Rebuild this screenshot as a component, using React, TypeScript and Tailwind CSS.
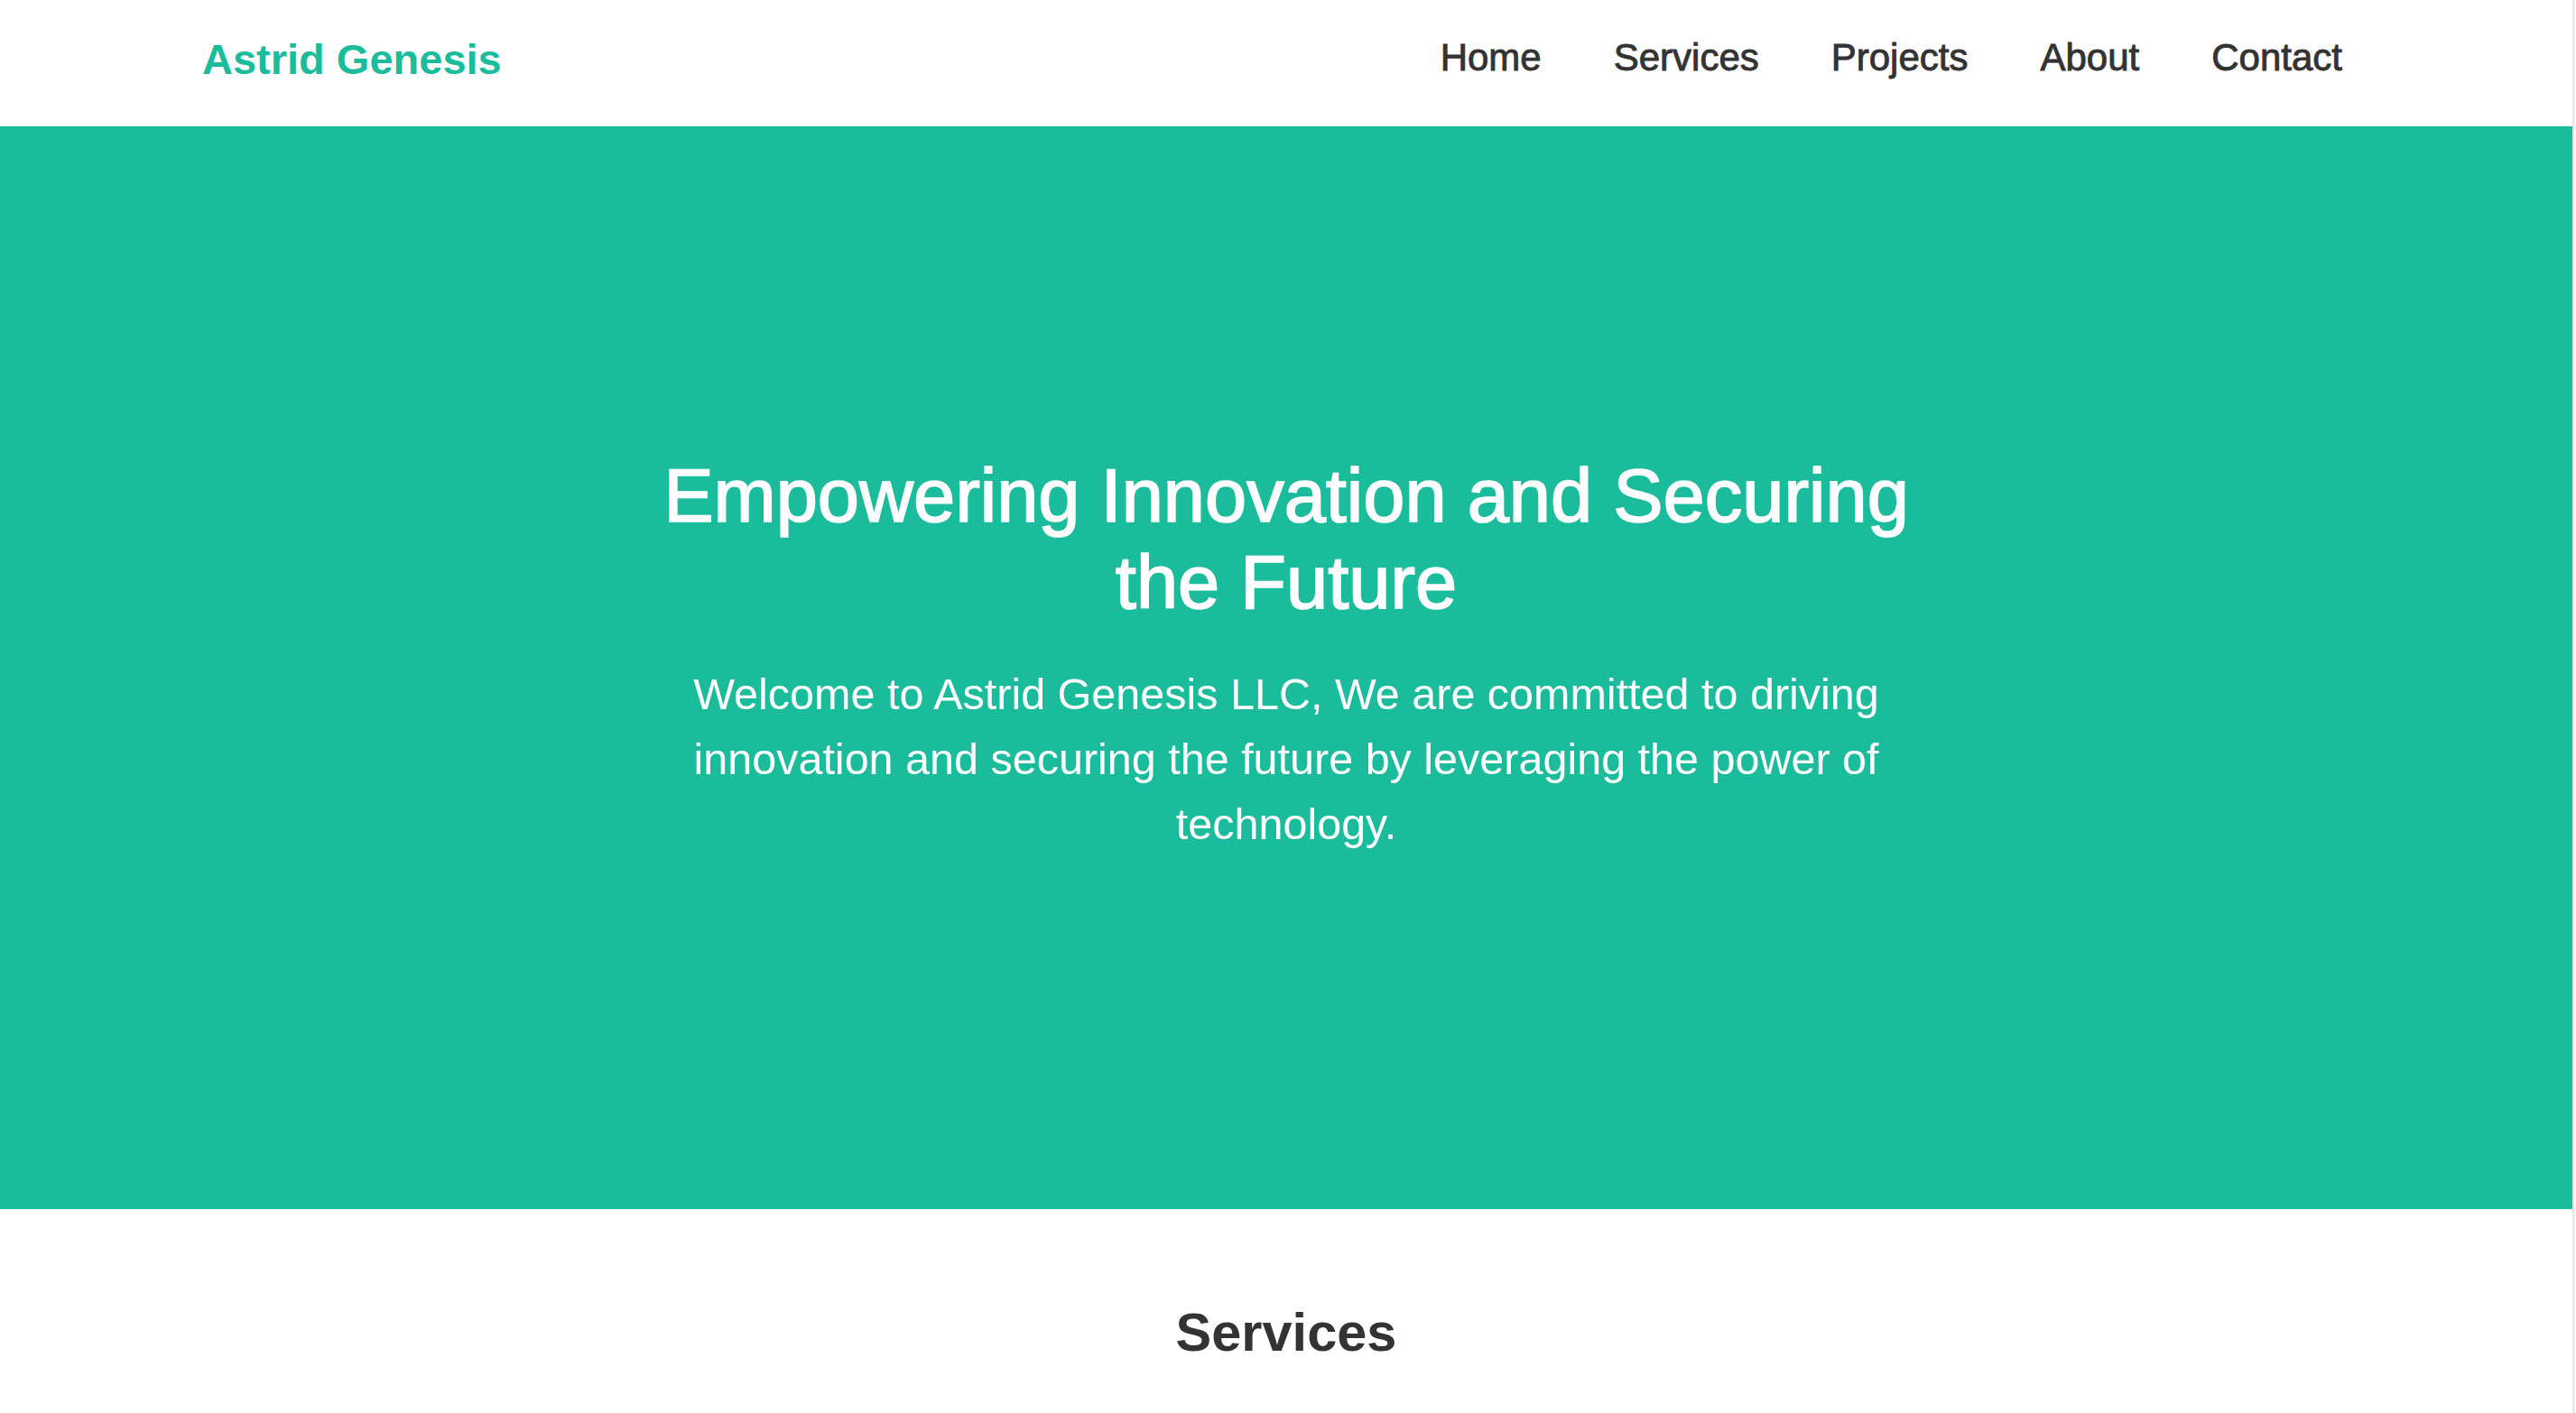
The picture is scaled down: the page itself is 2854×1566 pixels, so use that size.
const navLinks = ['Home', 'Services', 'Projects', 'About', 'Contact'];

export default function App() {
  return (
    <div className="flex h-screen w-full overflow-hidden bg-white font-['Liberation_Sans',Arial,sans-serif]">
      <div className="flex-1 min-w-0">
        {/* Header */}
        <header className="h-[140px] bg-white">
          <div className="mx-auto flex h-full w-[2402px] items-start justify-between pt-[42px]">
            <a href="#" className="text-[47px] font-bold leading-none text-[#1abc9c]">
              Astrid Genesis
            </a>
            <nav className="mt-[1px] flex items-center gap-[80px] pr-[31px]">
              {navLinks.map((link) => (
                <a
                  key={link}
                  href="#"
                  className="text-[42px] leading-none text-[#333333] [-webkit-text-stroke:0.9px_#333333]"
                >
                  {link}
                </a>
              ))}
            </nav>
          </div>
        </header>

        {/* Hero */}
        <section className="flex h-[1200px] flex-col items-center justify-center bg-[#1abc9c] pb-[30px] text-center text-white">
          <h1 className="max-w-[1420px] text-[83px] leading-[96px] [-webkit-text-stroke:1.7px_white]">
            Empowering Innovation and Securing the Future
          </h1>
          <p className="mt-[39px] max-w-[1420px] text-[48.5px] leading-[72px]">
            Welcome to Astrid Genesis LLC, We are committed to driving innovation and securing the future by
            leveraging the power of technology.
          </p>
        </section>

        {/* Services */}
        <section className="pt-[100px] text-center">
          <h2 className="text-[59.5px] font-bold leading-[74px] text-[#333333]">Services</h2>
        </section>
      </div>

      {/* scrollbar track */}
      <div className="w-[4px] shrink-0 border-l-2 border-[#e6e6e6] bg-[#f7f7f7]" />
    </div>
  );
}
